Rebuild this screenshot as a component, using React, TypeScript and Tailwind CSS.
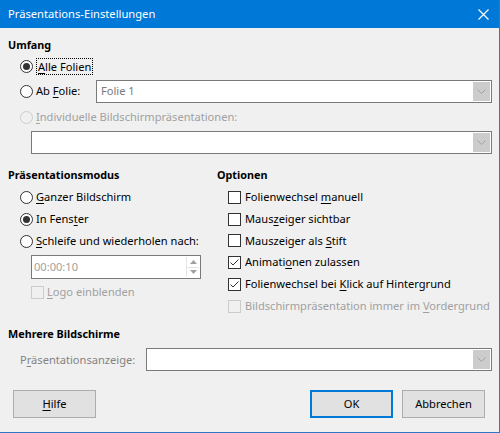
import React from "react";

const U = ({ children }: { children: React.ReactNode }) => (
  <span className="underline underline-offset-2">{children}</span>
);

function Radio({ checked = false, disabled = false }: { checked?: boolean; disabled?: boolean }) {
  return (
    <span
      className={
        "flex h-[13px] w-[13px] shrink-0 items-center justify-center rounded-full border " +
        (disabled ? "border-[#cccccc] bg-[#f0f0f0]" : "border-[#333333] bg-white")
      }
    >
      {checked && <span className="h-[7px] w-[7px] rounded-full bg-[#333333]" />}
    </span>
  );
}

function Check({ checked = false, disabled = false }: { checked?: boolean; disabled?: boolean }) {
  return (
    <span
      className={
        "flex h-[13px] w-[13px] shrink-0 items-center justify-center border " +
        (disabled ? "border-[#cccccc] bg-[#f0f0f0]" : "border-[#333333] bg-white")
      }
    >
      {checked && (
        <svg width="11" height="11" viewBox="0 0 11 11">
          <path d="M1.5 5.5 L4 8 L9.5 2.5" fill="none" stroke="#333333" strokeWidth="1" />
        </svg>
      )}
    </span>
  );
}

function Combo({ text, className = "" }: { text?: string; className?: string }) {
  return (
    <div className={"flex h-[23px] items-stretch border border-[#7a7a7a] bg-white " + className}>
      <div className="flex flex-1 items-center pl-[4px] text-[#7a7a7a]">{text}</div>
      <div className="m-px flex w-[17px] items-center justify-center bg-[#cccccc]">
        <svg width="9" height="5" viewBox="0 0 9 5">
          <path d="M0.5 0.5 L4.5 4.5 L8.5 0.5" fill="none" stroke="#a0a0a0" strokeWidth="1" />
        </svg>
      </div>
    </div>
  );
}

function Btn({ children, focus = false, className = "" }: { children: React.ReactNode; focus?: boolean; className?: string }) {
  return (
    <div
      className={
        "flex h-[28px] w-[83px] items-center justify-center bg-[#e1e1e1] " +
        (focus ? "border-2 border-[#0078d7]" : "border border-[#adadad]") +
        " " +
        className
      }
    >
      {children}
    </div>
  );
}

export default function App() {
  return (
    <div
      className="flex h-[433px] w-[500px] flex-col overflow-hidden whitespace-nowrap border-r border-b border-[#2b79c8] bg-[#f0f0f0] text-[11.1px] leading-[16px] text-black"
      style={{ fontFamily: '"Noto Sans", sans-serif' }}
    >
      <div className="flex h-[28px] shrink-0 items-center justify-between bg-[#0078d7] pl-[8px] pr-[10px] text-[11.2px] text-white">
        <span>Präsentations-Einstellungen</span>
        <svg width="11" height="11" viewBox="0 0 11 11">
          <path d="M0.5 0.5 L10.5 10.5 M10.5 0.5 L0.5 10.5" stroke="white" strokeWidth="1.2" />
        </svg>
      </div>

      <div className="flex flex-1 flex-col pl-[8px] pr-[7px]">
        <div className="mt-[9px] h-[16px] text-[10.8px] font-bold">Umfang</div>

        <div className="mt-[3px] flex h-[20px] items-center gap-[3px] pl-[12px]">
          <Radio checked />
          <span className="border border-dotted border-black px-px leading-[15px]">
            <U>A</U>lle Folien
          </span>
        </div>

        <div className="mt-[3px] flex h-[24px] items-center pl-[12px]">
          <div className="flex w-[76px] items-center gap-[3px]">
            <Radio />
            <span>
              Ab <U>F</U>olie:
            </span>
          </div>
          <Combo text="Folie 1" className="flex-1" />
        </div>

        <div className="mt-[4px] flex h-[20px] items-center gap-[3px] pl-[12px] text-[#a0a0a0]">
          <Radio disabled />
          <span>
            <U>I</U>ndividuelle Bildschirmpräsentationen:
          </span>
        </div>

        <Combo className="mt-[4px] ml-[23px]" />

        <div className="mt-[13px] flex">
          <div className="flex w-[209px] flex-col">
            <div className="h-[16px] text-[10.8px] font-bold">Präsentationsmodus</div>
            <div className="mt-[3px] flex h-[22px] items-center gap-[3px] pl-[12px]">
              <Radio />
              <span>
                <U>G</U>anzer Bildschirm
              </span>
            </div>
            <div className="flex h-[22px] items-center gap-[3px] pl-[12px]">
              <Radio checked />
              <span>
                In Fens<U>t</U>er
              </span>
            </div>
            <div className="flex h-[22px] items-center gap-[3px] pl-[12px]">
              <Radio />
              <span>
                <U>S</U>chleife und wiederholen nach:
              </span>
            </div>
            <div className="mt-[3px] ml-[23px] flex h-[24px] w-[170px] items-stretch border border-[#7a7a7a] bg-white">
              <div className="flex flex-1 items-center pl-[2px] text-[#a0a0a0]">00:00:10</div>
              <div className="m-px flex w-[13px] flex-col border-l border-[#e5e5e5]">
                <div className="flex flex-1 items-center justify-center border-b border-[#e5e5e5]">
                  <svg width="7" height="4" viewBox="0 0 7 4">
                    <path d="M0 4 L3.5 0 L7 4 Z" fill="#a0a0a0" />
                  </svg>
                </div>
                <div className="flex flex-1 items-center justify-center">
                  <svg width="7" height="4" viewBox="0 0 7 4">
                    <path d="M0 0 L3.5 4 L7 0 Z" fill="#a0a0a0" />
                  </svg>
                </div>
              </div>
            </div>
            <div className="mt-[2px] flex h-[22px] items-center gap-[3px] pl-[23px] text-[#a0a0a0]">
              <Check disabled />
              <span>
                <U>L</U>ogo einblenden
              </span>
            </div>
          </div>

          <div className="flex flex-1 flex-col">
            <div className="h-[16px] text-[10.8px] font-bold">Optionen</div>
            <div className="mt-[3px] flex h-[22px] items-center gap-[4px] pl-[11px]">
              <Check />
              <span>
                Folienwechsel <U>m</U>anuell
              </span>
            </div>
            <div className="flex h-[22px] items-center gap-[4px] pl-[11px]">
              <Check />
              <span>
                Maus<U>z</U>eiger sichtbar
              </span>
            </div>
            <div className="flex h-[21px] items-center gap-[4px] pl-[11px]">
              <Check />
              <span>
                Mauszeiger als <U>S</U>tift
              </span>
            </div>
            <div className="flex h-[22px] items-center gap-[4px] pl-[11px]">
              <Check checked />
              <span>
                Animati<U>o</U>nen zulassen
              </span>
            </div>
            <div className="flex h-[22px] items-center gap-[4px] pl-[11px]">
              <Check checked />
              <span>
                Folienwechsel bei <U>K</U>lick auf Hintergrund
              </span>
            </div>
            <div className="flex h-[22px] items-center gap-[4px] pl-[11px] text-[#a0a0a0]">
              <Check disabled />
              <span>
                Bildschirmpräsentation immer im <U>V</U>ordergrund
              </span>
            </div>
          </div>
        </div>

        <div className="mt-[9px] h-[16px] text-[10.8px] font-bold">Mehrere Bildschirme</div>

        <div className="mt-[6px] flex h-[23px] items-center pl-[12px]">
          <span className="w-[126px] text-[#838383]">
            P<U>r</U>äsentationsanzeige:
          </span>
          <Combo className="flex-1" />
        </div>

        <div className="mt-[19px] flex items-center pl-[5px]">
          <Btn>
            <U>H</U>ilfe
          </Btn>
          <Btn focus className="ml-auto">
            OK
          </Btn>
          <Btn className="ml-[9px] mr-[7px]">Abbrechen</Btn>
        </div>
      </div>
    </div>
  );
}
